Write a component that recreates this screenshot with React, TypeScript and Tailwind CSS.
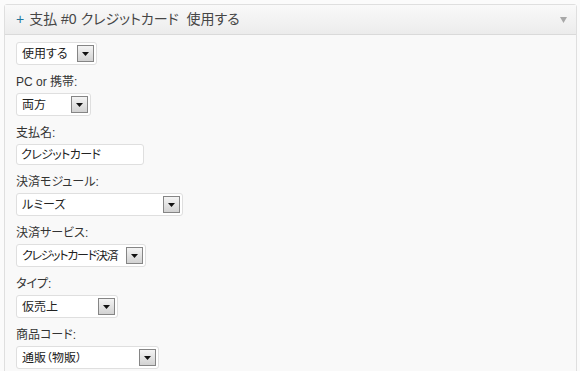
import React from "react";

const font = "font-['Liberation_Sans','Noto_Sans_CJK_JP',sans-serif] [font-feature-settings:'palt']";

function Arrow() {
  return (
    <div className="w-[17px] h-[17px] border border-[#858585] bg-gradient-to-b from-[#f4f4f4] to-[#d2d2d2] flex items-center justify-center shrink-0">
      <svg width="7" height="4" viewBox="0 0 7 4">
        <path d="M0 0h7L3.5 4z" fill="#111" />
      </svg>
    </div>
  );
}

function Select({ value, width, tight }: { value: string; width: number; tight?: boolean }) {
  return (
    <div
      className="h-[23px] bg-white border border-[#dfdfdf] rounded-[3px] flex items-center pl-[5px] pr-[2px]"
      style={{ width }}
    >
      <span
        className={
          tight
            ? "flex-1 text-[12px] text-[#222] whitespace-nowrap overflow-hidden leading-none tracking-[-1.3px]"
            : "flex-1 text-[12px] text-[#222] whitespace-nowrap overflow-hidden leading-none"
        }
      >
        {value}
      </span>
      <Arrow />
    </div>
  );
}

function Label({ text }: { text: string }) {
  return <div className="mt-[9px] mb-[3px] h-[16px] leading-[16px] text-[12px] text-[#333]">{text}</div>;
}

export default function App() {
  return (
    <div className={`w-[580px] h-[371px] bg-[#fbfbfb] pt-[4px] pl-[4px] overflow-hidden ${font}`}>
      <div className="w-[573px] h-[380px] border border-[#dfdfdf] rounded-t-[3px] bg-[#f9f9f9]">
        <div className="h-[30px] border-b border-[#dadada] bg-gradient-to-b from-[#f9f9f9] to-[#ececec] flex items-center pl-[11px] pr-[9px]">
          <span className="text-[#21759b] text-[14px] mr-[5px]">+</span>
          <span className="text-[14px] text-[#464646]">支払 #0 クレジットカード&nbsp;&nbsp;使用する</span>
          <span className="flex-1" />
          <svg width="7" height="6" viewBox="0 0 7 6">
            <path d="M0 0h7L3.5 6z" fill="#a8a8a8" />
          </svg>
        </div>
        <div className="pl-[11px] pt-[7px] flex flex-col items-start">
          <Select value="使用する" width={81} />
          <Label text="PC or 携帯:" />
          <Select value="両方" width={75} />
          <Label text="支払名:" />
          <div className="w-[128px] h-[21px] bg-white border border-[#dfdfdf] rounded-[3px] flex items-center pl-[4px] text-[12px] text-[#222] tracking-[-0.6px]">
            クレジットカード
          </div>
          <Label text="決済モジュール:" />
          <Select value="ルミーズ" width={167} />
          <Label text="決済サービス:" />
          <Select value="クレジットカード決済" width={130} tight />
          <Label text="タイプ:" />
          <Select value="仮売上" width={102} />
          <Label text="商品コード:" />
          <Select value="通販（物販）" width={143} />
        </div>
      </div>
    </div>
  );
}
